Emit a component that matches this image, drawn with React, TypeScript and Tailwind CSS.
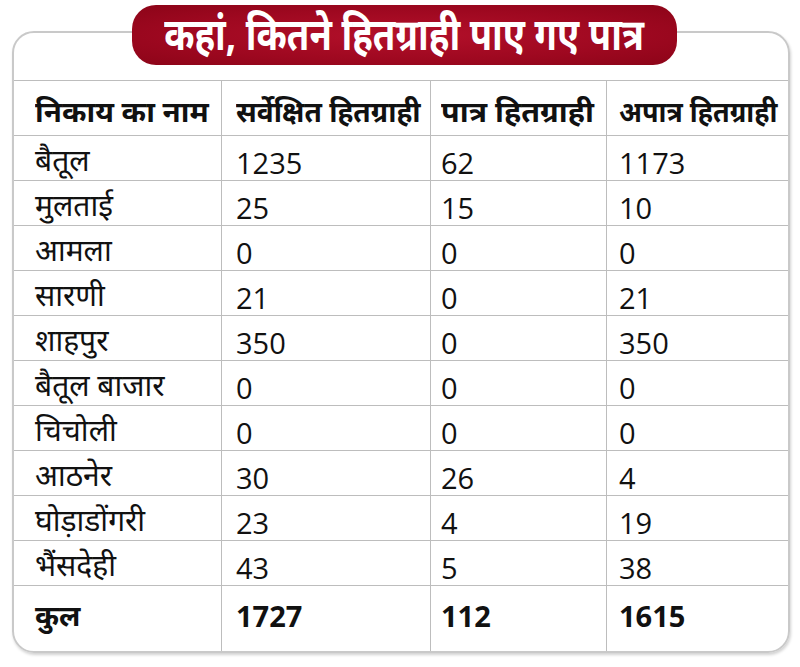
const rows = [
  { name: "बैतूल", s: "1235", p: "62", a: "1173" },
  { name: "मुलताई", s: "25", p: "15", a: "10" },
  { name: "आमला", s: "0", p: "0", a: "0" },
  { name: "सारणी", s: "21", p: "0", a: "21" },
  { name: "शाहपुर", s: "350", p: "0", a: "350" },
  { name: "बैतूल बाजार", s: "0", p: "0", a: "0" },
  { name: "चिचोली", s: "0", p: "0", a: "0" },
  { name: "आठनेर", s: "30", p: "26", a: "4" },
  { name: "घोड़ाडोंगरी", s: "23", p: "4", a: "19" },
  { name: "भैंसदेही", s: "43", p: "5", a: "38" },
];

const cols = "grid grid-cols-[208px_209px_176px_1fr]";
const cell = "flex items-center border-r border-[#bdbdbd] last:border-r-0";

export default function App() {
  return (
    <div className="w-[800px] h-[667px] bg-white overflow-hidden font-['Open_Sans','Noto_Sans_Devanagari','Lohit_Devanagari',sans-serif] text-[#111]">
      <div className="flex flex-col pt-[5px] pl-[12px]">
        {/* title */}
        <div className="relative z-10 ml-[120px] w-[545px] h-[60px] rounded-[24px] bg-[radial-gradient(ellipse_at_center,#b3102a_0%,#9e0820_60%,#8c0418_100%)] flex items-center justify-center">
          <span className="inline-block text-white text-[44px] font-bold leading-none scale-x-[0.83] whitespace-nowrap pb-[4px]">
            कहां, कितने हितग्राही पाए गए पात्र
          </span>
        </div>

        {/* card */}
        <div className="-mt-[34px] w-[778px] h-[622px] rounded-[22px] border-2 border-[#c9c9c9] shadow-[1px_2px_3px_rgba(0,0,0,0.18)] flex flex-col overflow-hidden">
          <div className="h-[48px] shrink-0 border-b border-[#bdbdbd]" />

          <div className={`${cols} h-[55px] shrink-0 border-b border-[#bdbdbd] text-[29px] font-bold leading-none`}>
            <div className={`${cell} pl-[21px] pt-[5px]`}>
              <span className="inline-block origin-left scale-x-[1.02] whitespace-nowrap">निकाय का नाम</span>
            </div>
            <div className={`${cell} pl-[14px] pt-[5px]`}>
              <span className="inline-block origin-left scale-x-[0.97] whitespace-nowrap">सर्वेक्षित हितग्राही</span>
            </div>
            <div className={`${cell} pl-[10px] pt-[5px]`}>
              <span className="inline-block origin-left scale-x-[1.05] whitespace-nowrap">पात्र हितग्राही</span>
            </div>
            <div className={`${cell} pl-[12px] pt-[5px]`}>
              <span className="inline-block origin-left scale-x-[0.93] whitespace-nowrap">अपात्र हितग्राही</span>
            </div>
          </div>

          {rows.map((r) => (
            <div key={r.name} className={`${cols} h-[45px] shrink-0 border-b border-[#bdbdbd] text-[29px] leading-none`}>
              <div className={`${cell} pl-[21px] pt-[4px] text-[30px]`}>{r.name}</div>
              <div className={`${cell} pl-[14px] pt-[8px]`}>{r.s}</div>
              <div className={`${cell} pl-[10px] pt-[8px]`}>{r.p}</div>
              <div className={`${cell} pl-[12px] pt-[8px]`}>{r.a}</div>
            </div>
          ))}

          <div className={`${cols} flex-1 text-[29px] font-bold leading-none`}>
            <div className={`${cell} pl-[21px] pb-[8px]`}>कुल</div>
            <div className={`${cell} pl-[14px] pb-[6px]`}>1727</div>
            <div className={`${cell} pl-[10px] pb-[6px]`}>112</div>
            <div className={`${cell} pl-[12px] pb-[6px]`}>1615</div>
          </div>
        </div>
      </div>
    </div>
  );
}
